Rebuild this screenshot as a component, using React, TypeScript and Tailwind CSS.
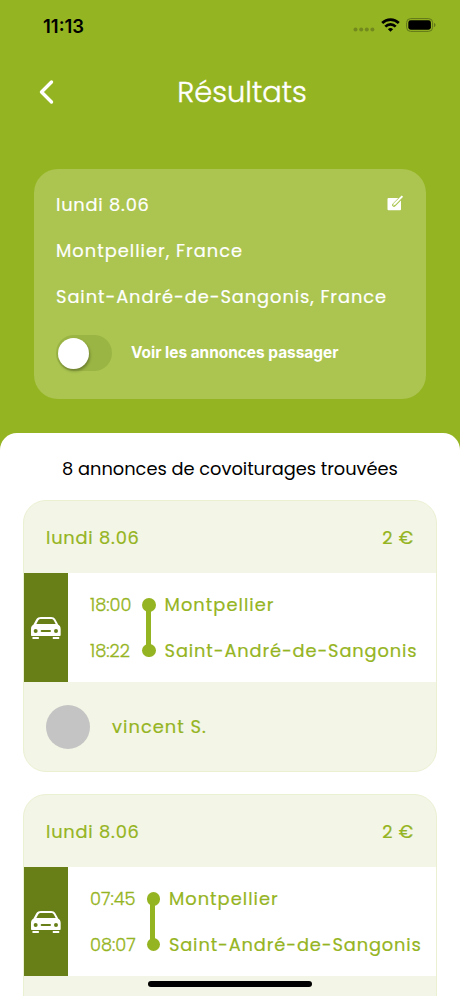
interface Ride {
  date: string
  price: string
  departure: string
  arrival: string
  from: string
  to: string
  driver?: string
}

const rides: Ride[] = [
  {
    date: 'lundi 8.06',
    price: '2 €',
    departure: '18:00',
    arrival: '18:22',
    from: 'Montpellier',
    to: 'Saint-André-de-Sangonis',
    driver: 'vincent S.',
  },
  {
    date: 'lundi 8.06',
    price: '2 €',
    departure: '07:45',
    arrival: '08:07',
    from: 'Montpellier',
    to: 'Saint-André-de-Sangonis',
  },
]

function StatusBar() {
  return (
    <div className="flex h-[50px] items-center justify-between pl-[43px] pr-[24px]">
      <span className="mt-[2px] font-['Inter',sans-serif] text-[18.5px] leading-6 font-semibold text-black">11:13</span>
      <div className="flex items-center">
        <svg className="mt-[9px] mr-[6px]" width="22" height="5" viewBox="0 0 22 5" fill="#71891d">
          <circle cx="2.5" cy="2.5" r="2" />
          <circle cx="8.2" cy="2.5" r="2" />
          <circle cx="13.8" cy="2.5" r="2" />
          <circle cx="19.4" cy="2.5" r="2" />
        </svg>
        <svg width="19" height="14" viewBox="0 0 19 14" fill="none" stroke="#000" strokeWidth="2.7">
          <path d="M1.2 5a11.8 11.8 0 0 1 16.6 0" />
          <path d="M4.3 8.6a7.4 7.4 0 0 1 10.4 0" />
          <path d="M9.5 13.8 6.9 11.2a3.8 3.8 0 0 1 5.2 0z" fill="#000" stroke="none" />
        </svg>
        <svg className="ml-[6px]" width="30" height="14" viewBox="0 0 30 14">
          <rect x="0.6" y="0.6" width="26" height="12.8" rx="4" fill="none" stroke="#62771a" strokeWidth="1" />
          <rect x="2.3" y="2.3" width="22.6" height="9.4" rx="2.4" fill="#000" />
          <path d="M28 5v4c.9-.4 1.5-1.1 1.5-2S28.9 5.4 28 5z" fill="#62771a" />
        </svg>
      </div>
    </div>
  )
}

function EditIcon() {
  return (
    <svg className="-mt-[4px]" width="17" height="16" viewBox="0 0 17 16">
      <rect x="0.5" y="3" width="13.5" height="12.3" rx="1" fill="#fff" />
      <path d="M7 10 15.3 1.5" stroke="#abc550" strokeWidth="3.8" strokeLinecap="round" />
      <path d="M5.9 10.8 6.9 8.3 14.7.4l1.4 1.4-7.8 7.9z" fill="#fff" />
    </svg>
  )
}

function CarIcon() {
  return (
    <svg width="30" height="22" viewBox="0 0 90 66">
      <path
        fillRule="evenodd"
        fill="#fff"
        d="M30 0h30c6 0 10 2 13 7l9 16c5 3 7 7 7 13v17c0 3-1 4-4 4H4c-3 0-4-1-4-4V36c0-6 2-10 7-13l9-16c3-5 8-7 14-7zM30 6c-4 0-6 1-8 4l-6 11h58L68 10c-2-3-4-4-8-4zM14 36a6 6 0 1 0 0 12 6 6 0 0 0 0-12zM75 36a6 6 0 1 0 0 12 6 6 0 0 0 0-12zM32 39a3 3 0 0 0 0 6h25a3 3 0 0 0 0-6z"
      />
      <rect x="4" y="60" width="20" height="6" rx="2" fill="#fff" />
      <rect x="65" y="60" width="20" height="6" rx="2" fill="#fff" />
    </svg>
  )
}

function SearchCard() {
  return (
    <div className="mx-[34px] flex h-[230px] flex-col rounded-[24px] bg-[#abc550] px-[22px] pt-[24px] text-[17.8px] leading-6 text-white [-webkit-text-stroke:0.2px]">
      <div className="flex h-6 items-center justify-between">
        <p className="tracking-[0.8px]">lundi 8.06</p>
        <EditIcon />
      </div>
      <p className="mt-[22px] tracking-[1.03px]">Montpellier, France</p>
      <p className="mt-[22px] tracking-[0.95px]">Saint-André-de-Sangonis, France</p>
      <div className="mt-[26px] flex items-center">
        <div className="flex h-9 w-14 items-center rounded-full bg-[#9bb544] pl-[2px]">
          <div className="size-[31px] rounded-full bg-white shadow-[1px_2px_3px_rgba(0,0,0,0.3)]" />
        </div>
        <span className="ml-[19px] font-['Inter',sans-serif] text-[15.4px] font-bold [-webkit-text-stroke:0]">
          Voir les annonces passager
        </span>
      </div>
    </div>
  )
}

function RideCard({ ride }: { ride: Ride }) {
  return (
    <div className="h-[272px] shrink-0 overflow-hidden rounded-[23px] border border-[#eaf0d2] bg-[#f3f6e6] text-[17.8px] leading-6 text-[#95b422] [-webkit-text-stroke:0.2px]">
      {/* Date and price */}
      <div className="flex h-[72px] items-center justify-between px-[22px] pt-[2px] tracking-[0.8px]">
        <span>{ride.date}</span>
        <span>{ride.price}</span>
      </div>

      {/* Route */}
      <div className="flex h-[109px] bg-white">
        <div className="flex w-11 items-center justify-center bg-[#687f18]">
          <CarIcon />
        </div>
        <div className="ml-[22px] flex flex-col justify-center gap-[22px] font-light [-webkit-text-stroke:0.3px]">
          <span>{ride.departure}</span>
          <span>{ride.arrival}</span>
        </div>
        <div className="ml-[11px] flex flex-col items-center justify-center">
          <div className="size-[13.5px] rounded-full bg-[#95b422]" />
          <div className="-my-[2px] mr-[2px] h-9 w-[5px] bg-[#95b422]" />
          <div className="size-[13.5px] rounded-full bg-[#95b422]" />
        </div>
        <div className="ml-[8.6px] flex flex-col justify-center gap-[22px] whitespace-nowrap">
          <span className="tracking-[1.05px]">{ride.from}</span>
          <span className="tracking-[0.89px]">{ride.to}</span>
        </div>
      </div>

      {/* Driver */}
      {ride.driver && (
        <div className="flex h-[89px] items-center px-[22px]">
          <div className="size-[44px] rounded-full bg-[#c4c4c4]" />
          <span className="ml-[22px] tracking-[1.05px]">{ride.driver}</span>
        </div>
      )}
    </div>
  )
}

export default function App() {
  return (
    <div className="relative h-[996px] w-[460px] overflow-hidden bg-[#95b422] font-['Poppins','Inter',sans-serif]">
      <StatusBar />
      <div className="flex h-[119px] items-start px-[38px] pt-[22px]">
        <svg className="mt-[7px]" width="18" height="26" viewBox="0 0 18 26" fill="none">
          <path d="M13.5 3 3.5 13l10 10" stroke="#fff" strokeWidth="3.4" strokeLinecap="round" strokeLinejoin="round" />
        </svg>
        <h1 className="flex-1 pl-[6px] text-center text-[28.9px] leading-10 font-light text-white [-webkit-text-stroke:0.4px]">
          Résultats
        </h1>
      </div>
      <SearchCard />
      <div className="mt-[34px] flex h-[563px] flex-col overflow-hidden rounded-t-[17px] bg-white px-[23px]">
        <p className="mt-[24px] mb-[19px] text-center text-[17.8px] leading-6 text-black">8 annonces de covoiturages trouvées</p>
        <div className="flex flex-col gap-[22.4px]">
          {rides.map((ride) => (
            <RideCard key={ride.departure} ride={ride} />
          ))}
        </div>
      </div>
      <div className="absolute bottom-[9px] left-[148px] h-[6px] w-[164px] rounded-full bg-black" />
    </div>
  )
}
